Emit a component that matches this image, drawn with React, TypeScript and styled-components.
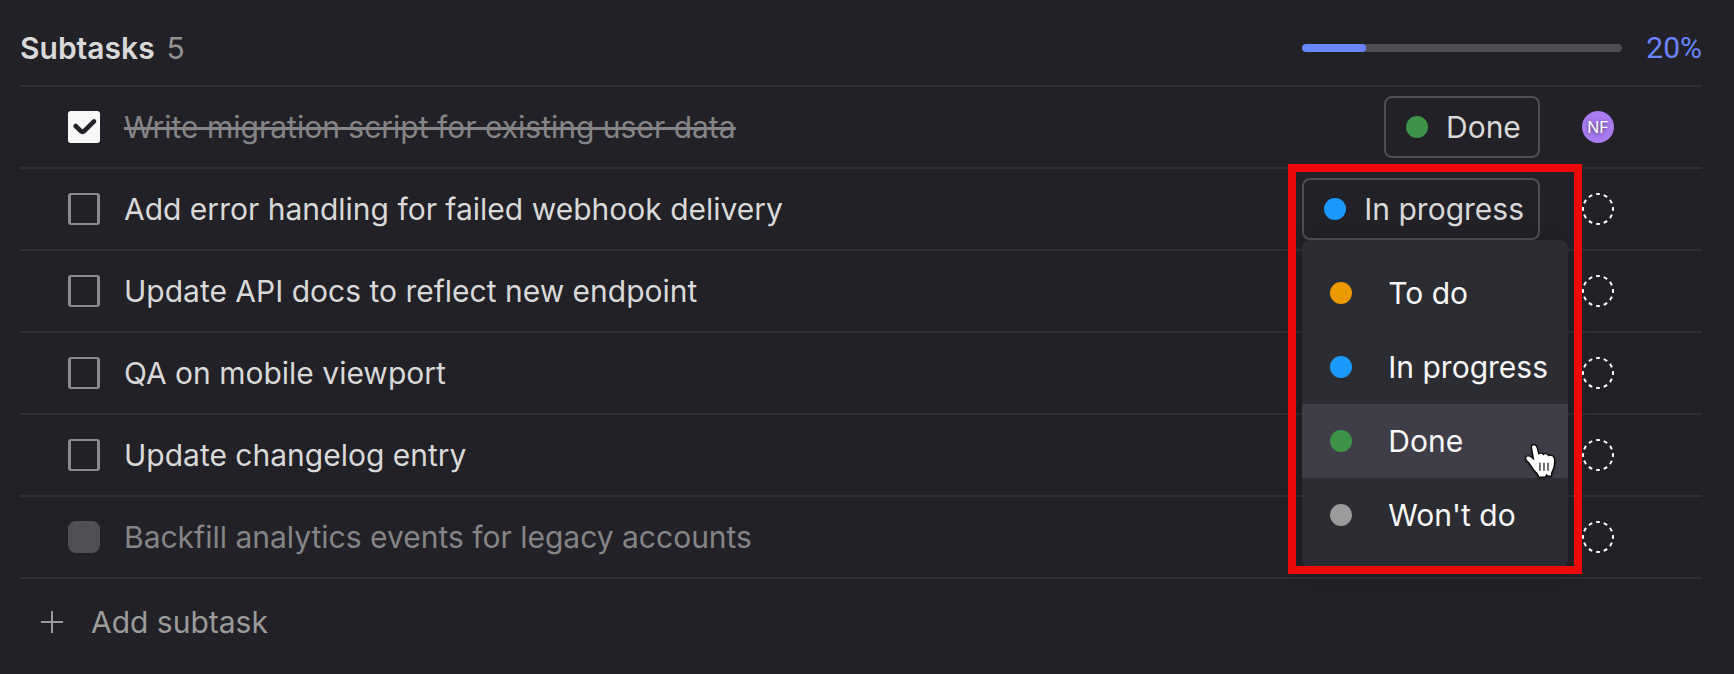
import React, { useState } from "react";
import styled, { createGlobalStyle } from "styled-components";

const GlobalStyle = createGlobalStyle`
  *, *::before, *::after { box-sizing: border-box; }
  html { background: #222127; }
  body {
    margin: 0;
    background: #222127;
    color: #d9d9d9;
    font-family: Inter, "Liberation Sans", sans-serif;
    font-size: 30px;
    line-height: 36px;
  }
  button { font: inherit; color: inherit; background: none; border: 0; padding: 0; cursor: pointer; }
`;

const Panel = styled.main`
  padding: 0 32px 32px 20px;
`;

const Header = styled.header`
  display: flex;
  align-items: center;
  justify-content: space-between;
  padding: 30px 0 19px;
`;

const Heading = styled.div`
  display: flex;
  gap: 12px;
`;

const Title = styled.h2`
  margin: 0;
  font-size: 30px;
  font-weight: 600;
`;

const Count = styled.span`
  color: #929292;
`;

const ProgressGroup = styled.label`
  display: flex;
  align-items: center;
  gap: 24px;
  color: #6985ff;
  font-family: Roboto, sans-serif;
`;

const ProgressBar = styled.progress`
  appearance: none;
  display: block;
  width: 320px;
  height: 8px;
  border: 0;
  border-radius: 4px;
  overflow: hidden;

  &::-webkit-progress-bar { background: #4f4e53; }
  &::-webkit-progress-value { background: #6985ff; border-radius: 4px; }
`;

const List = styled.ul`
  margin: 0;
  padding: 0;
  list-style: none;
  border-bottom: 2px solid #302f35;
`;

const Row = styled.li`
  display: flex;
  align-items: center;
  height: 82px;
  padding: 0 88px 0 48px;
  border-top: 2px solid #302f35;
`;

const TaskLabel = styled.label`
  display: flex;
  align-items: center;
  gap: 24px;
  flex: 1;
`;

const Check = styled.span`
  display: grid;
  width: 32px;
  height: 32px;
  > * { grid-area: 1 / 1; }
  > svg { pointer-events: none; }
`;

const Checkbox = styled.input`
  appearance: none;
  margin: 0;
  width: 32px;
  height: 32px;
  border: 2px solid #8b8b8c;
  border-width: 2px 3px;
  border-radius: 3px;
  background: transparent;

  &:checked { background: #f7f7f7; border-color: #f7f7f7; }
  &:disabled { background: #504f54; border-color: #504f54; border-radius: 8px; }
`;

const TaskName = styled.span<{ $state: TaskState }>`
  color: ${(p) => (p.$state === "open" ? "#d9d9d9" : "#858486")};
  text-decoration: ${(p) => (p.$state === "done" ? "line-through 3px" : "none")};
`;

const StatusCell = styled.div`
  position: relative;
  margin-right: 42px;
`;

const StatusButton = styled.button`
  display: flex;
  align-items: center;
  gap: 18px;
  min-width: 156px;
  height: 62px;
  padding: 0 14px 0 20px;
  border: 2px solid #4f4e53;
  border-radius: 8px;
`;

const Dot = styled.span<{ $color: string }>`
  flex: none;
  width: 22px;
  height: 22px;
  border-radius: 50%;
  background: ${(p) => p.$color};
`;

const Menu = styled.div`
  position: absolute;
  z-index: 1;
  top: 100%;
  left: 0;
  width: 266px;
  padding: 16px 0;
  border-radius: 8px;
  background: #2c2d32;
  color: #f8f8f8;
  box-shadow: 0 4px 20px rgba(0, 0, 0, 0.25);
`;

const MenuItem = styled.button<{ $active: boolean }>`
  position: relative;
  display: flex;
  align-items: center;
  gap: 36px;
  width: 100%;
  height: 74px;
  padding: 0 0 0 28px;
  background: ${(p) => (p.$active ? "#3f3e48" : "transparent")};
  white-space: nowrap;
`;

const HandPointer = styled.svg`
  position: absolute;
  z-index: 1;
  top: 38px;
  right: 10px;
  filter: drop-shadow(0 1px 1px rgba(0, 0, 0, 0.5));
`;

const HighlightFrame = styled.div`
  position: absolute;
  z-index: 2;
  inset: -14px -42px -334px -14px;
  border: 8px solid #eb0909;
  pointer-events: none;
`;

const Avatar = styled.button`
  width: 32px;
  height: 32px;
  border-radius: 50%;
  background: #a97cf0;
  color: #fff;
  font-size: 16px;
  line-height: 32px;
  text-align: center;
  text-shadow: 0 1px 4px rgba(0, 0, 0, 0.6);
`;

const EmptyAvatar = styled.button`
  display: block;
  width: 32px;
  height: 32px;
  border-radius: 50%;
  > svg { display: block; }
`;

const AddButton = styled.button`
  display: flex;
  align-items: center;
  gap: 28px;
  margin: 25px 0 0 21px;
  color: #9b9b9c;
`;

type TaskState = "open" | "done" | "disabled";
type Status = "To do" | "In progress" | "Done" | "Won't do";

interface Task {
  name: string;
  state: TaskState;
  status?: Status;
  menuOpen?: boolean;
  assignee?: string;
}

const statusColors: Record<Status, string> = {
  "To do": "#ed9a00",
  "In progress": "#1a99ff",
  Done: "#3d9348",
  "Won't do": "#9b9b9b",
};

const statuses = Object.keys(statusColors) as Status[];

const initialTasks: Task[] = [
  { name: "Write migration script for existing user data", state: "done", status: "Done", assignee: "NF" },
  { name: "Add error handling for failed webhook delivery", state: "open", status: "In progress", menuOpen: true },
  { name: "Update API docs to reflect new endpoint", state: "open" },
  { name: "QA on mobile viewport", state: "open" },
  { name: "Update changelog entry", state: "open" },
  { name: "Backfill analytics events for legacy accounts", state: "disabled" },
];

function StatusMenu() {
  return (
    <Menu role="menu">
      {statuses.map((status) => (
        <MenuItem key={status} type="button" role="menuitem" $active={status === "Done"}>
          <Dot $color={statusColors[status]} />
          {status}
          {status === "Done" && (
            <HandPointer width="34" height="38" viewBox="0 0 34 38" aria-hidden="true">
              <path
                d="M8.2 6.2C7.8 4.2 8.6 3.2 9.8 3.2C11.3 3.2 12.2 4.4 12.6 6L14.4 13C15.2 11.4 18.6 11.3 19.2 13.6C20.2 11.7 23.6 12 24.2 14.5C25.4 13.2 29.6 13.8 30 17.4C30.2 21.5 29.6 26 28 28.4C27 30 27 31.4 26.9 33.6H24L22.6 31.8L21 34.4H15.2C14.6 32.4 13.6 31 12 29.6C9.4 27 7.6 23.4 5.4 20.6C4.4 19.4 2 17.6 2.2 16C2.6 14.2 5.6 14.2 7.4 15.8L10.4 18.4Z"
                fill="#fff"
                stroke="#000"
                strokeWidth="2.4"
                strokeLinejoin="round"
                paintOrder="stroke"
              />
              <path d="M16 20.8V28.8M20 20.8V28.8M24 20.8V28.8" stroke="#222" strokeWidth="1.3" />
            </HandPointer>
          )}
        </MenuItem>
      ))}
    </Menu>
  );
}

function TaskRow({ task, onToggle }: { task: Task; onToggle: () => void }) {
  return (
    <Row>
      <TaskLabel>
        <Check>
          <Checkbox
            type="checkbox"
            checked={task.state === "done"}
            disabled={task.state === "disabled"}
            onChange={onToggle}
          />
          {task.state === "done" && (
            <svg width="32" height="32" viewBox="0 0 32 32" aria-hidden="true">
              <path
                d="M7.6 15L12.9 20.2Q14.5 21.4 16.1 20.2L26 10.4"
                fill="none"
                stroke="#222127"
                strokeWidth="4.6"
                strokeLinecap="round"
                strokeLinejoin="round"
              />
            </svg>
          )}
        </Check>
        <TaskName $state={task.state}>{task.name}</TaskName>
      </TaskLabel>
      {task.status && (
        <StatusCell>
          <StatusButton type="button" aria-haspopup="menu" aria-expanded={!!task.menuOpen}>
            <Dot $color={statusColors[task.status]} />
            {task.status}
          </StatusButton>
          {task.menuOpen && (
            <>
              <StatusMenu />
              <HighlightFrame />
            </>
          )}
        </StatusCell>
      )}
      {task.assignee ? (
        <Avatar type="button">{task.assignee}</Avatar>
      ) : (
        <EmptyAvatar type="button" aria-label="Assign">
          <svg width="32" height="32" viewBox="0 0 32 32" aria-hidden="true">
            <circle
              cx="16"
              cy="16"
              r="15"
              fill="none"
              stroke="#fff"
              strokeWidth="2"
              pathLength="120"
              strokeDasharray="5 5"
              strokeDashoffset="2.5"
            />
          </svg>
        </EmptyAvatar>
      )}
    </Row>
  );
}

export default function App() {
  const [tasks, setTasks] = useState(initialTasks);

  const toggle = (index: number) =>
    setTasks((current) =>
      current.map((task, i) =>
        i === index ? { ...task, state: task.state === "done" ? "open" : "done" } : task,
      ),
    );

  return (
    <>
      <GlobalStyle />
      <Panel>
        <Header>
          <Heading>
            <Title>Subtasks</Title>
            <Count>5</Count>
          </Heading>
          <ProgressGroup>
            <ProgressBar value={20} max={100} />
            20%
          </ProgressGroup>
        </Header>
        <List>
          {tasks.map((task, index) => (
            <TaskRow key={task.name} task={task} onToggle={() => toggle(index)} />
          ))}
        </List>
        <AddButton type="button">
          <svg width="22" height="22" viewBox="0 0 22 22" aria-hidden="true">
            <path d="M11 0V22M0 11H22" stroke="currentColor" strokeWidth="2" />
          </svg>
          Add subtask
        </AddButton>
      </Panel>
    </>
  );
}
